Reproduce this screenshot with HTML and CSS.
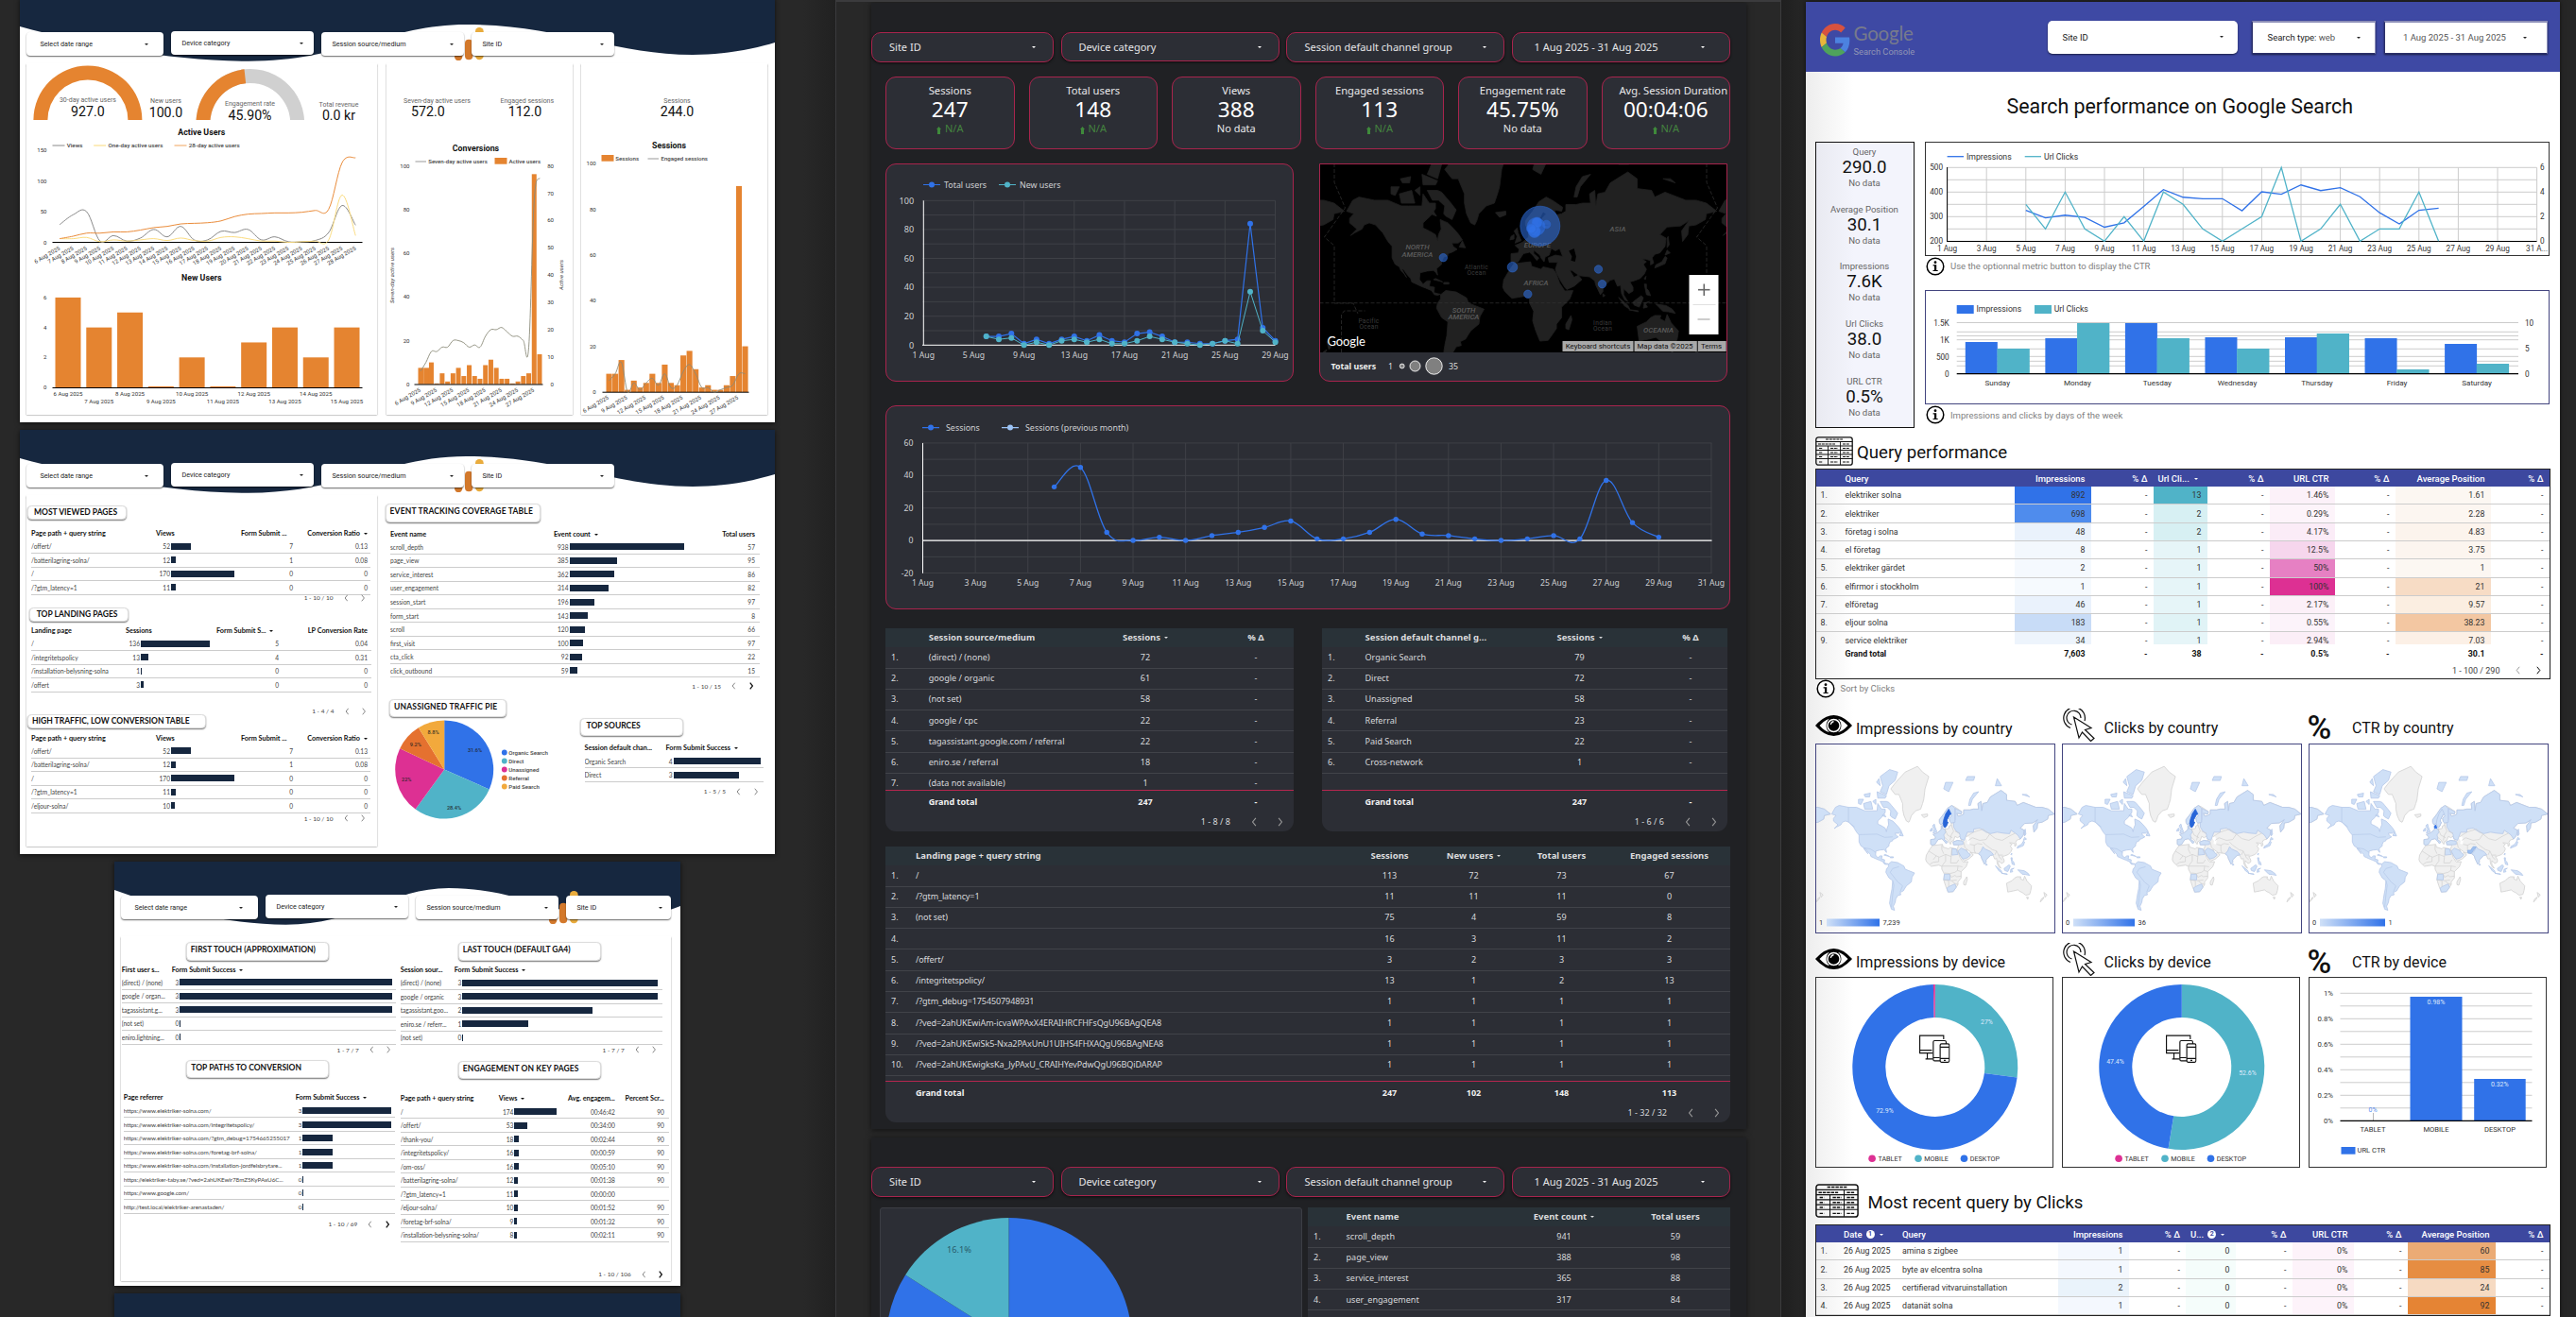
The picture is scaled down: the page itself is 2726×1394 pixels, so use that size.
FILE: index.html
```html
<!DOCTYPE html>
<html lang="en">
<head>
<meta charset="utf-8">
<title>Analytics reports</title>
<link rel="stylesheet" href="styles.css">
</head>
<body>
<svg class="defs" width="0" height="0">
  <symbol id="prev" viewBox="0 0 5 9"><path d="M4.2.8 1.2 4.5l3 3.7" fill="none" stroke="currentColor"/></symbol>
  <symbol id="next" viewBox="0 0 5 9"><path d="M.8.8l3 3.7-3 3.7" fill="none" stroke="currentColor"/></symbol>
  <symbol id="wave" viewBox="0 0 799 70" preserveAspectRatio="none"><path fill="#16273f" d="M0 0H799V47C779 53 749 60 712 60C630 60 570 28 472 28C392 28 340 66.700 242 66.700C159 66.700 69 49 0 30Z"/></symbol>
  <symbol id="bars" viewBox="0 0 31 35"><path fill="#d3792c" d="M0 25h8.300v6a4.150 4.150 0 0 1-8.300 0z"/><rect x="11" y="12.700" width="8.300" height="21.600" rx="4.100" fill="#d3792c"/><rect x="22" y="0" width="8.700" height="34.300" rx="4.200" fill="#eaac3c"/></symbol>
  <symbol id="info" viewBox="0 0 20 20"><circle cx="10" cy="10" r="8.800" fill="#fff" stroke="#000" stroke-width="1.500"/><circle cx="10" cy="5.700" r="1.400"/><path d="M7.600 8.300h3.600v5.600h1.500v1.200H7.500v-1.200H9V9.500H7.600z"/></symbol>
  <symbol id="eye" viewBox="0 0 39 22"><path d="M0 11Q19.500-11 39 11Q19.500 33 0 11z"/><path fill="#fff" d="M4.500 11Q10 5 15 3.700a9.500 9.500 0 0 0 0 14.600Q10 17 4.500 11zM34.500 11Q29 5 24 3.700a9.500 9.500 0 0 1 0 14.600Q29 17 34.500 11z"/><circle cx="19.500" cy="11" r="7.300" fill="#fff"/><circle cx="19.500" cy="11" r="5.800"/><path d="M19.500 6.500a4.500 4.500 0 0 0-3.300 3.300" fill="none" stroke="#fff" stroke-width="1.300"/></symbol>
  <symbol id="pointer" viewBox="0 0 34 35"><g fill="none" stroke="#111" stroke-width="1.200"><path d="M8 20.500A11.300 11.300 0 1 1 23 13"/><path d="M9.500 17A7.500 7.500 0 1 1 19 10"/><path fill="#fff" d="M11.500 9 30 20.500l-6.500 2 9.500 9-3.500 3-9-9.500-3.500 6z"/></g></symbol>
  <symbol id="grid" viewBox="0 0 40 31" preserveAspectRatio="none"><g fill="none" stroke="#111"><rect x=".8" y=".8" width="38.400" height="29.400" rx="2.500" stroke-width="1.300"/><path d="M.8 5.500h38.400M.8 10h38.400M.8 14.500h38.400M.8 19h38.400M.8 23.500h38.400" stroke-width="1"/><path d="M13.500 10v20M26.500 5.500v24.500" stroke-width=".9"/><path d="M11 3h18M3 8h18M29 8h7M4 12.500h4M16 12.500h8M29 12.500h7M4 17h4M16 17h8M29 17h7M4 21.500h4M16 21.500h8M29 21.500h7M4 27h4M16 27h8M29 27h7" stroke-width="1.200" stroke-dasharray="3 .8"/></g></symbol>
  <symbol id="devices" viewBox="0 0 34 31"><g fill="#fff" stroke="#111" stroke-width="1.200"><path d="M15 20H.8V1h26v4M.8 17H14M9 20v6M7 26.500h8" fill="none"/><rect x="15.500" y="6.500" width="14" height="22" rx="1.500"/><path d="M15.500 25h7"/><rect x="23" y="10" width="10" height="20" rx="1.500"/><path d="M23 13.500h10M23 26h10M27 28h2"/></g></symbol>
</svg>

<section class="col-left">
  <article class="page p1">
    <svg class="wave"><use href="#wave"/></svg><svg class="bars"><use href="#bars"/></svg>
    <div class="filters"><div class="filter f1">Select date range<i></i></div><div class="filter f2">Device category<i></i></div><div class="filter f3">Session source/medium<i></i></div><div class="filter f4">Site ID<i></i></div></div>
    <div class="cards">
      <div class="card"><svg id="overview" class="chart" viewBox="27.5 67 371.5 371.5"></svg></div>
      <div class="card narrow"><svg id="conversions" class="chart" viewBox="408.5 67 197.5 371.5"></svg></div>
      <div class="card narrow"><svg id="sessions-bars" class="chart" viewBox="614.5 67 197.5 371.5"></svg></div>
    </div>
  </article>

  <article class="page p2">
    <svg class="wave"><use href="#wave"/></svg><svg class="bars"><use href="#bars"/></svg>
    <div class="filters"><div class="filter f1">Select date range<i></i></div><div class="filter f2">Device category<i></i></div><div class="filter f3">Session source/medium<i></i></div><div class="filter f4">Site ID<i></i></div></div>
    <div class="cards">
      <div class="card stack">
        <h3 class="badge b-viewed">MOST VIEWED PAGES</h3>
        <div class="table light t-viewed" data-table="viewed"></div>
        <div class="pager pg-viewed" data-pager="1 - 10 / 10"></div>
        <h3 class="badge b-landing">TOP LANDING PAGES</h3>
        <div class="table light t-landing" data-table="landing"></div>
        <div class="pager pg-landing" data-pager="1 - 4 / 4"></div>
        <h3 class="badge b-traffic">HIGH TRAFFIC, LOW CONVERSION TABLE</h3>
        <div class="table light t-viewed t-traffic" data-table="traffic"></div>
        <div class="pager pg-traffic" data-pager="1 - 10 / 10"></div>
      </div>
      <div class="stack side">
        <h3 class="badge b-events">EVENT TRACKING COVERAGE TABLE</h3>
        <div class="table light t-events" data-table="events"></div>
        <div class="pager pg-events more" data-pager="1 - 10 / 15"></div>
        <div class="split">
          <div class="stack pie-col">
            <h3 class="badge b-pie">UNASSIGNED TRAFFIC PIE</h3>
            <svg id="traffic-pie" class="pie" viewBox="408.500 758.500 200 112"></svg>
          </div>
          <div class="stack">
            <h3 class="badge b-sources">TOP SOURCES</h3>
            <div class="table light t-sources" data-table="sources"></div>
            <div class="pager pg-sources" data-pager="1 - 5 / 5"></div>
          </div>
        </div>
      </div>
    </div>
  </article>

  <article class="page p3">
    <svg class="wave"><use href="#wave"/></svg><svg class="bars"><use href="#bars"/></svg>
    <div class="filters"><div class="filter f1">Select date range<i></i></div><div class="filter f2">Device category<i></i></div><div class="filter f3">Session source/medium<i></i></div><div class="filter f4">Site ID<i></i></div></div>
    <div class="card wide">
      <div class="stack half">
        <h3 class="badge b-first">FIRST TOUCH (APPROXIMATION)</h3>
        <div class="table light t-first" data-table="first"></div>
        <div class="pager pg-first" data-pager="1 - 7 / 7"></div>
        <h3 class="badge b-paths">TOP PATHS TO CONVERSION</h3>
        <div class="table light t-paths" data-table="paths"></div>
        <div class="pager pg-paths more" data-pager="1 - 10 / 69"></div>
      </div>
      <div class="stack half">
        <h3 class="badge b-last">LAST TOUCH (DEFAULT GA4)</h3>
        <div class="table light t-last" data-table="last"></div>
        <div class="pager pg-last" data-pager="1 - 7 / 7"></div>
        <h3 class="badge b-key">ENGAGEMENT ON KEY PAGES</h3>
        <div class="table light t-key" data-table="key"></div>
        <div class="pager pg-key more" data-pager="1 - 10 / 106"></div>
      </div>
    </div>
  </article>
  <article class="page p4"></article>
</section>

<section class="col-mid">
  <article class="dark d1">
    <div class="dfilters"><div class="dfilter a">Site ID<i></i></div><div class="dfilter b">Device category<i></i></div><div class="dfilter c">Session default channel group<i></i></div><div class="dfilter d">1 Aug 2025 - 31 Aug 2025<i></i></div></div>
    <div class="scores">
      <div class="score"><span>Sessions</span><b>247</b><em><svg viewBox="0 0 5 8"><path d="M2.500 0 5 3H4v5H1V3H0z"/></svg>N/A</em></div>
      <div class="score"><span>Total users</span><b>148</b><em><svg viewBox="0 0 5 8"><path d="M2.500 0 5 3H4v5H1V3H0z"/></svg>N/A</em></div>
      <div class="score"><span>Views</span><b>388</b><small>No data</small></div>
      <div class="score"><span>Engaged sessions</span><b>113</b><em><svg viewBox="0 0 5 8"><path d="M2.500 0 5 3H4v5H1V3H0z"/></svg>N/A</em></div>
      <div class="score"><span>Engagement rate</span><b>45.75%</b><small>No data</small></div>
      <div class="score last"><span>Avg. Session Duration</span><b>00:04:06</b><em><svg viewBox="0 0 5 8"><path d="M2.500 0 5 3H4v5H1V3H0z"/></svg>N/A</em></div>
    </div>
    <div class="drow">
      <div class="panel users"><svg id="users" viewBox="937 173 432 231"></svg></div>
      <div class="panel geo"><svg id="geo" viewBox="1395.500 173 432 231"></svg></div>
    </div>
    <div class="panel sessions"><svg id="sessions" viewBox="937 429 894 215"></svg></div>
    <div class="drow tables">
      <div class="dt t-source" data-table="source"></div>
      <div class="dt t-channel" data-table="channel"></div>
    </div>
    <div class="dt t-pages" data-table="pages"></div>
  </article>
  <article class="dark d2">
    <div class="dfilters"><div class="dfilter a">Site ID<i></i></div><div class="dfilter b">Device category<i></i></div><div class="dfilter c">Session default channel group<i></i></div><div class="dfilter d">1 Aug 2025 - 31 Aug 2025<i></i></div></div>
    <div class="drow second">
      <div class="piebox"><svg id="bigpie" viewBox="931 1278 447 116"></svg></div>
      <div class="dt t-ev" data-table="ev"></div>
    </div>
  </article>
</section>

<section class="col-right">
  <article class="sc">
    <header class="sc-head">
      <svg class="glogo" viewBox="0 0 48 48" preserveAspectRatio="none"><path fill="#d8523f" d="M24 9.500c3.540 0 6.710 1.220 9.210 3.600l6.850-6.850C35.900 2.380 30.470 0 24 0 14.620 0 6.510 5.380 2.560 13.220l7.980 6.190C12.430 13.720 17.740 9.500 24 9.500z"/><path fill="#4c82e0" d="M46.980 24.550c0-1.570-.15-3.090-.38-4.550H24v9.020h12.940c-.58 2.960-2.260 5.480-4.780 7.180l7.730 6c4.510-4.180 7.090-10.360 7.090-17.650z"/><path fill="#e9b63a" d="M10.530 28.590c-.48-1.450-.76-2.990-.76-4.590s.27-3.140.76-4.590l-7.980-6.190C.92 16.460 0 20.120 0 24c0 3.880.92 7.540 2.560 10.780l7.970-6.190z"/><path fill="#4fa35c" d="M24 48c6.480 0 11.930-2.130 15.890-5.810l-7.730-6c-2.150 1.450-4.920 2.300-8.160 2.300-6.260 0-11.570-4.220-13.470-9.910l-7.980 6.190C6.510 42.620 14.620 48 24 48z"/></svg>
      <div class="gname"><b>Google</b><span>Search Console</span></div>
      <div class="sf s1">Site ID<i></i></div>
      <div class="sf s2"><span>Search type: <u>web</u></span><i></i></div>
      <div class="sf s3">1 Aug 2025 - 31 Aug 2025<i></i></div>
    </header>
    <h1>Search performance on Google Search</h1>
    <div class="sc-top">
      <div class="kpis">
        <div><span>Query</span><b>290.0</b><span>No data</span></div>
        <div><span>Average Position</span><b>30.1</b><span>No data</span></div>
        <div><span>Impressions</span><b>7.6K</b><span>No data</span></div>
        <div><span>Url Clicks</span><b>38.0</b><span>No data</span></div>
        <div><span>URL CTR</span><b>0.5%</b><span>No data</span></div>
      </div>
      <div class="sc-charts">
        <div class="box k"><svg id="sc-line" viewBox="2037 150 661 121.500"></svg></div>
        <p class="note"><svg><use href="#info"/></svg>Use the optionnal metric button to display the CTR</p>
        <div class="box n"><svg id="sc-bars" viewBox="2037 307 661 121.500"></svg></div>
        <p class="note"><svg><use href="#info"/></svg>Impressions and clicks by days of the week</p>
      </div>
    </div>
    <h2 class="h-query"><svg><use href="#grid"/></svg><span>Query performance</span></h2>
    <div class="st t-query" data-table="query"></div>
    <p class="note sort"><svg><use href="#info"/></svg>Sort by Clicks</p>
    <div class="heads country"><h2 class="eye"><svg><use href="#eye"/></svg>Impressions by country</h2><h2 class="clicks"><svg><use href="#pointer"/></svg>Clicks by country</h2><h2 class="rate"><b>%</b>CTR by country</h2></div>
    <div class="trio"><div class="box m"><svg id="map1" viewBox="1921 787.500 254 201"></svg></div><div class="box m"><svg id="map2" viewBox="2182 787.500 254 201"></svg></div><div class="box m"><svg id="map3" viewBox="2443 787.500 254 201"></svg></div></div>
    <div class="heads device"><h2 class="eye"><svg><use href="#eye"/></svg>Impressions by device</h2><h2 class="clicks"><svg><use href="#pointer"/></svg>Clicks by device</h2><h2 class="rate"><b>%</b>CTR by device</h2></div>
    <div class="trio dev"><div class="box k"><svg id="donut1" viewBox="1920.500 1035 252.500 202"></svg></div><div class="box k"><svg id="donut2" viewBox="2181.500 1035 252.500 202"></svg></div><div class="box k"><svg id="ctr" viewBox="2443.500 1035 252.500 202"></svg></div></div>
    <h2 class="h-recent"><svg><use href="#grid"/></svg><span>Most recent query by Clicks</span></h2>
    <div class="st t-recent" data-table="recent"></div>
  </article>
</section>
<script src="app.js"></script>
</body>
</html>
```

FILE: styles.css
```css
*{box-sizing:border-box}
html{overflow:hidden}
body{margin:0;width:2726px;height:1394px;overflow:hidden;display:flex;background:#272727;font-family:Roboto,sans-serif;color:#222}
h1,h2,h3,p{margin:0;font-weight:400;white-space:nowrap}
svg{display:block}
.defs{position:absolute}
svg text{white-space:pre}

/* left column: light reports */
.col-left{width:884px;height:1394px;flex:none;overflow:hidden;padding-left:21px;background:linear-gradient(90deg,#282828 850px,#212121)}
.page{position:relative;width:799px;height:449px;margin-bottom:8px;padding:36px 0 0 6.5px;background:#fff;box-shadow:0 1px 5px #000a}
.p1{margin-top:-2px}
.p3{width:599px;margin-left:100px}
.p4{width:599px;height:25px;margin:0 0 0 100px;padding:0;background:#16273f}
.wave{position:absolute;left:0;top:0;width:100%;height:70px}
.bars{position:absolute;left:460px;top:31px;width:31px;height:35px}
.filters{position:relative;display:flex;height:26px;align-items:flex-start}
.filter{display:flex;align-items:center;justify-content:space-between;width:150.500px;height:25px;margin-right:8.500px;padding:0 11px 0 11.500px;background:#fff;border-radius:4px;box-shadow:0 1px 1.500px #0009;font-size:7.200px;color:#222}
.filter.f1{width:145px;padding:0 15.500px 0 15px}
.filter.f2{margin-top:-.7px}
.p3 .f4{width:111px;padding:0 9px 0 11.500px}
.filter i,.dfilter i,.sf i{border:2.200px solid transparent;border-top-color:#222;border-bottom:0}
.cards{display:flex;margin-top:7px}
.card{position:relative;width:371.500px;height:371.500px;background:#fff;box-shadow:0 .7px 1.500px #0008;margin-right:9.500px;flex:none}
.card.narrow{width:197.500px;margin-right:8.500px}
.p3 .card{display:flex;width:582px;height:365px;margin:16.500px 0 0 .3px}
.chart,.panel svg,.box>svg,.piebox svg{width:100%;height:100%}
.stack{display:flex;flex-direction:column;align-items:flex-start}
.card.stack{margin-right:0}
.half{width:292px;flex:none}
.badge{height:15px;flex:none;display:flex;align-items:center;border:1px solid #ddd;border-radius:4.500px;background:#fff;box-shadow:0 1px 1.500px #0008;font:700 8.500px/1 Lato,sans-serif;color:#111}
.b-viewed{width:104.500px;margin:11px 0 0 1.500px;padding-left:6px}
.b-landing{width:105px;margin:4.500px 0 0 3.700px;padding-left:6.500px}
.b-traffic{width:189px;margin:-2.500px 0 0 1.500px;padding-left:4px}
.b-events{width:164.500px;height:20px;margin:8.500px 0 0 8.500px;padding:0 0 2px 4px;letter-spacing:.18px}
.b-pie{width:123.500px;height:19.500px;margin:7.500px 0 0 13px;padding:0 0 2px 4px;letter-spacing:.18px}
.b-sources{width:108.500px;height:19px;margin:28px 0 0 6px;padding:0 0 2px 5.500px}
.b-first{width:151px;height:20px;margin:6px 0 0 69px;padding:0 0 2px 4px}
.b-last{width:151px;height:20px;margin:6px 0 0 65px;padding:0 0 2px 4px}
.b-paths{width:151px;height:19.500px;margin:4.500px 0 0 69px;padding:0 0 2px 4.500px}
.b-key{width:151px;height:19px;margin:5.200px 0 0 65px;padding:0 0 2px 4px;letter-spacing:.1px}

/* tables shared */
.row{display:grid;grid-template-columns:var(--cols);align-items:center}
.row>*{white-space:nowrap;display:flex;align-items:center;height:100%}
.l{justify-content:flex-start}.r{justify-content:flex-end}.c{justify-content:center}
.tri{border:2px solid transparent;border-top-color:currentColor;border-bottom:0;margin:1px 0 0 4px}
.body{overflow:hidden}
.light{font:6.600px Lato,sans-serif;color:#444;padding-left:4px}
.light .head{height:14px;font-weight:700;font-size:7.300px;color:#111}
.light .tr{height:14.520px;border-bottom:1px solid #ccc;margin-left:-4px;padding-left:4px}
.n{width:var(--n);text-align:right;flex:none}
.bar{height:7px;background:#16273f;margin-left:1px;flex:none}
.t-viewed{width:363px;margin:7.500px 0 0 1.500px;--cols:132px 90px 55px 79px;--n:15px}
.t-landing{width:364px;margin:2.500px 0 0 1.500px;--cols:100px 96px 66px 94px;--n:15px}
.t-traffic{margin-top:3px}
.t-events{width:395px;margin:5.700px 0 0 10px;--cols:173px 113px 100px;--n:15.500px}
.t-sources{width:193px;margin:5.800px 0 0 6.500px;--cols:86px 100px;--n:7px}
.t-first{width:294px;margin:2.500px 0 0 -3px;--cols:53px 233px;--n:7.500px}
.t-last{width:281px;margin:3px 0 0 0;--cols:57px 215px;--n:7.500px}
.t-paths{width:290px;margin:13.700px 0 0 0;padding-left:3px;--cols:182px 102px;--n:6.500px}
.p3 .light{letter-spacing:-.05px}
.t-paths .tr{padding-left:3px;margin-left:-3px;font-size:6.350px;letter-spacing:-.09px}
.t-paths .body{height:119.500px}
.t-key{width:288px;margin:14.200px 0 0 0;--cols:104px 62px 61px 52px;--n:15.500px}
.pager{display:flex;align-items:center;height:12px;flex:none;font:6.500px Lato,sans-serif;color:#444}
.pager span{width:40px;text-align:right;margin-right:11px}
.pager svg{width:4.500px;height:8px;color:#777;margin-right:14px}
.pager.more svg:last-child{color:#111;stroke-width:1.400}
.pg-viewed{margin:-3px 0 0 285px}.pg-landing{margin:14px 0 0 286px}.pg-traffic{margin:-.3px 0 0 285px}
.pg-events{margin:2.800px 0 0 324px}.pg-sources{margin:3.700px 0 0 120px}
.pg-first{margin:-.5px 0 0 212px}.pg-last{margin:-.7px 0 0 201px}.pg-paths{margin:1.500px 0 0 210.500px}.pg-key{margin:28px 0 0 208px}
.split{display:flex}
.pie-col{width:209px}
.pie{width:200px;height:112px;margin-left:9.500px}

/* middle column: dark report */
.col-mid{width:1001px;height:1394px;flex:none;overflow:hidden;border:1px solid #3b3b3d;border-width:2px 1px 0 1px;background:#282828;padding:1px 0 0 37px;font-family:"Noto Sans",sans-serif}
.dark{width:925.500px;background:#202124;box-shadow:0 1px 6px #0009}
.d1{height:1192px;padding-top:31px}
.d2{height:190px;margin-top:9px;padding-top:31px;overflow:hidden}
.dfilters{display:flex}
.dfilter{display:flex;align-items:center;justify-content:space-between;height:31.500px;border:1px solid #a8244d;border-radius:10px;background:#2c2e35;color:#e4e4e6;font-size:11px;box-shadow:0 1px 3px #000a}
.dfilter i{border-width:2.500px 2.500px 0;border-top-color:#fff}
.dfilter.a{width:193px;padding:0 18px;border-left-width:.5px}
.dfilter.b{width:231px;height:31px;margin:0 7.500px;padding:0 18px}
.dfilter.c{width:231px;padding:0 18.500px}
.dfilter.d{width:231.500px;margin-left:7.500px;padding:0 26px 0 23px}
.scores{display:flex;justify-content:space-between;margin:15px 16.500px 0 15px}
.score{width:136.500px;height:77px;padding-top:5px;border:1px solid #a8244d;border-radius:11px;background:#2c2e35;color:#e8e8ea;display:flex;flex-direction:column;align-items:center;white-space:nowrap;font-size:11.200px}
.score span{height:18px;line-height:18px}
.score b{font-weight:400;font-size:22.600px;line-height:22px;color:#fff}
.score em,.score small{font-style:normal;font-size:11px;line-height:18px;display:flex;align-items:center}
.score em{color:#44843f}
.score em svg{width:5px;height:8px;margin:4px 4px 0 0;fill:#3f8a3b}
.score.last span{margin-left:16px}
.drow{display:flex;margin:15.500px 0 0 15px}
.panel{border:1px solid #a8244d;border-radius:11px;background:#2c2e35;overflow:hidden;flex:none}
.panel svg{margin:-1px;width:calc(100% + 2px);height:calc(100% + 2px)}
.users{width:432px;height:231px}
.geo{width:432px;height:231px;margin-left:26.500px;border-radius:0 0 11px 11px}
.sessions{width:894px;height:215.500px;margin:25px 0 0 15px}
.drow.tables{margin-top:20.500px}
.dt{display:flex;flex-direction:column;background:#2c2e35;border-radius:0 0 11px 11px;font-size:9.050px;color:#d8d9dc;overflow:hidden}
.dt .head{height:20.300px;background:#293238;font-weight:700;font-size:9.500px;color:#dcdcde}
.dt .tr{height:22.300px;border-bottom:1px solid #414349}
.dt .row>*{padding-bottom:1.500px}
.dt .tr>:first-child,.dt .head>:first-child{padding-left:6px}
.dt .total{height:24px;border-top:1.500px solid #b5264f;font-weight:700;color:#f0f0f0}
.dt .foot{display:flex;align-items:center;justify-content:flex-end;height:19px;padding-right:11px}
.dt .foot svg{width:6px;height:10px;color:#999;margin-left:22px}
.t-source{width:432px;height:215px;--cols:45.700px 152.300px 154px 80px}
.t-channel{width:429px;height:215px;margin-left:30px;--cols:45.500px 148.500px 157px 78px}
.t-source .body,.t-channel .body{height:151px}
.t-pages{width:894px;height:291.500px;margin:16px 0 0 15px;--cols:32px 456px 91px 87px 99px 129px}
.t-pages .body{height:228px}
.t-pages .tr>:nth-child(2){letter-spacing:-.12px}
.t-ev{width:447px;height:140px;--cols:40.500px 147.500px 166px 70px}
.second{margin:11.500px 0 0 9px}
.piebox{width:447px;height:160px;margin-right:6px;background:#2c2e35;border:1px solid #3c3e44;border-radius:3px}
.piebox svg{height:116px;margin:-1px;width:447px}

/* right column: search console */
.col-right{width:841px;height:1394px;overflow:hidden;padding:2px 0 0 25.500px;background:linear-gradient(90deg,#1f1f1f,#252525 20px,#262626)}
.sc{width:798.500px;height:1392px;overflow:hidden;background:linear-gradient(90deg,#ededed,#fff 50px);box-shadow:0 0 5px #0009}
.sc-head{height:74px;background:#3e49a4;display:flex;align-items:flex-start;padding:20px 0 0 15.500px}
.glogo{width:32px;height:34.500px;margin-top:3px}
.gname{width:205.500px;margin-left:3.500px;padding-top:1px;color:#777a8c}
.gname b{display:block;font:400 20.500px/25px Lato,sans-serif;letter-spacing:-.2px}
.gname span{display:block;font:9.300px/12px Roboto,sans-serif;color:#9195b4;margin-top:1px}
.sf{display:flex;align-items:center;justify-content:space-between;height:34.500px;background:#fff;font-size:9.500px;color:#222;box-shadow:0 1px 2px #0009}
.sf u{text-decoration:none;color:#555}
.s1{width:201px;border-radius:5px;padding:0 15.500px}
.s2,.s3{border:1px solid #2b2f68;border-top:2px solid #8d8fb8;border-right-color:#8d8fb8}
.s2{width:131px;margin-left:15px;padding:0 15.500px}
.s3{width:173px;margin-left:9px;padding:0 21.500px 0 19px;color:#555}
h1{height:73.500px;line-height:73px;text-align:center;font-size:21.400px;color:#111;padding-right:6px}
.sc-top{display:flex;padding-left:10px}
.kpis{width:105px;height:303px;border:1.500px solid #111;background:linear-gradient(90deg,#e9eaf1,#f3f4fc 40px);text-align:center;padding-top:2.500px;font-size:9.600px;color:#666}
.kpis div{height:60.700px;display:flex;flex-direction:column}
.kpis span{line-height:16px}
.kpis b{font-weight:400;font-size:18.700px;line-height:17px;color:#111}
.sc-charts{margin-left:11.500px}
.box{border:1px solid #222;overflow:hidden;flex:none}
.box>svg{margin:-1px;width:calc(100% + 2px);height:calc(100% + 2px)}
.sc-charts .box{width:661px;height:121.500px}
.box.k{border:1.300px solid #333}
.box.n,.box.m{border:1px solid #43457f}
.note{display:flex;align-items:center;height:20px;margin-top:.8px;font-size:9.500px;color:#808080}
.note svg{width:20px;height:20px;margin:0 6px 0 1px}
.sc-charts .box.n{margin-top:15px}
h2{display:flex;align-items:center;font-size:18.600px;color:#111}
.h-query{margin:9.300px 0 0 10px;height:31px}
.h-query svg{width:40px;height:31px;margin-right:4.500px}
.h-query span{padding-top:2.500px}
.st{display:flex;flex-direction:column;margin-left:10px;width:778px;border:1px solid #222;font-size:8.800px;color:#333}
.st .head{height:17.700px;background:#3d489f;color:#fff;font-weight:500;font-size:9.500px}
.st .tr{height:19.280px;border-bottom:1px solid #ccc}
.st .row>*{padding:0 6px 0 0}
.st .row>:first-child{padding-left:5px}
.st .total{height:19px;font-weight:700;color:#111}
.st .foot{display:flex;align-items:center;justify-content:flex-end;height:17px;padding-right:9px;font-size:9px;color:#444}
.st .foot svg{width:5px;height:9px;color:#999;margin-left:17px}
.st .foot svg:first-of-type{margin-left:16px}
.st .foot svg:last-child{color:#000}
.st .tri{margin-left:5px}
.st .indent{padding-left:5px}
.num{width:9px;height:9px;border-radius:5px;background:#fff;color:#3d489f;font:700 7px/9px Roboto;text-align:center;margin-left:4px}
.t-query{height:223px;margin-top:3.700px;--cols:31px 179px 81px 66px 57px 66px 69px 64px 101px 62px}
.t-query .body{height:167px}
.t-recent{margin-top:7.500px;--cols:29.500px 62px 164.500px 75px 60.500px 52.500px 60px 65px 57px 93px 57px}
.note.sort{margin:-.5px 0 0 10px}
.note.sort svg{margin-right:6px}
.heads{display:flex;height:37px;margin:11px 0 0 10px}
.heads h2{font-size:16px;width:261px;align-items:flex-start;line-height:20px;padding-top:12.300px}
.heads .eye svg{width:39px;height:22px;margin:-5px 4.500px 0 0}
.heads .clicks{padding-top:11px}
.heads .clicks svg{width:34px;height:35px;margin:-11px 10px 0 1px}
.heads .rate{padding-top:11px}
.heads .rate b{font:500 35px/30px Roboto,sans-serif;width:47.500px;margin:-5px 0 0 -1px}
.trio{display:flex;margin-left:10.500px}
.trio .box{width:254px;height:201px;margin-right:7px}
.heads.device{margin-top:10px}
.heads.device .eye{padding-top:11.500px}
.trio.dev{margin:-.5px 0 0 10px}
.trio.dev .box{width:252.500px;height:202px;margin-right:8.700px}
.h-recent{margin:16.500px 0 0 10px;height:36px}
.h-recent svg{width:46px;height:36px;margin-right:10px}
.h-recent span{padding-top:5px}
```

FILE: app.js
```js
const BLUE = '#3072e8', TEAL = '#50b3c8', ORANGE = '#e58430', PINK = '#dd3093';
const $ = id => document.getElementById(id);
const line = (x1, y1, x2, y2, c, w = 1, more = '') => `<line x1="${x1}" y1="${y1}" x2="${x2}" y2="${y2}" stroke="${c}" stroke-width="${w}" ${more}/>`;
const rect = (x, y, w, h, c) => `<rect x="${x}" y="${y}" width="${w}" height="${h}" fill="${c}"/>`;
const text = (x, cy, s, size, c = '#444', anchor = 'start', more = '') =>
  `<text x="${x}" y="${cy + size * 0.36}" font-size="${size}" fill="${c}" text-anchor="${anchor}" ${more}>${s}</text>`;
const poly = (p, c, w = 1) => `<polyline points="${p.map(q => q.join()).join(' ')}" fill="none" stroke="${c}" stroke-width="${w}"/>`;
function smooth(p, c, w = 1) {
  let d = `M${p[0]}`;
  for (let i = 0; i < p.length - 1; i++) {
    const a = p[i - 1] || p[i], b = p[i], e = p[i + 1], f = p[i + 2] || e;
    d += `C${b[0] + (e[0] - a[0]) / 5.5},${b[1] + (e[1] - a[1]) / 5.5} ${e[0] - (f[0] - b[0]) / 5.5},${e[1] - (f[1] - b[1]) / 5.5} ${e}`;
  }
  return `<path d="${d}" fill="none" stroke="${c}" stroke-width="${w}"/>`;
}
const pts = (v, x0, dx, y0, k) => v.map((n, i) => [x0 + i * dx, y0 - n * k]);
function slice(cx, cy, R, r, from, to, c) {
  const P = (rad, t) => [cx + rad * Math.sin(t * 2 * Math.PI), cy - rad * Math.cos(t * 2 * Math.PI)];
  const big = to - from > .5 ? 1 : 0;
  return `<path fill="${c}" d="M${P(R, from)}A${R} ${R} 0 ${big} 1 ${P(R, to)}L${P(r, to)}A${r} ${r} 0 ${big} 0 ${P(r, from)}Z"/>`;
}

/* ---- overview card ---- */
(() => {
  const views = [29, 45, 50, 2, 11, 2, 7, 21, 9, 26, 4, 4, 18, 16, 21, 4, 9, 1, 1, 3, 16, 60, 28];
  const one = [6, 6, 8, 1, 4, 2, 4, 6, 3, 7, 3, 2, 8, 9, 6, 2, 2, 0, 1, 2, 4, 77, 11];
  const month = [6, 10, 15, 15, 17, 17, 20, 24, 26, 30, 31, 32, 35, 42, 46, 47, 48, 48, 49, 52, 54, 130, 138];
  let s = slice(92.4, 127, 57.5, 42.5, -.25, .25, ORANGE);
  s += `<clipPath id="g"><rect x="200" y="60" width="130" height="66.900"/></clipPath><g clip-path="url(#g)">` + slice(264.3, 130.3, 57.3, 42.4, -.3, .3, '#d0d0d0') + slice(264.3, 130.3, 57.3, 42.4, -.3, -.0175, ORANGE) + '</g>';
  for (const [x, y, a, b] of [[92.4, 105.7, '30-day active users', '927.0'], [175, 106.7, 'New users', '100.0'], [264, 109.7, 'Engagement rate', '45.90%'], [358, 110.5, 'Total revenue', '0.0 kr']])
    s += text(x, y, a, 7, '#666', 'middle') + text(x, y + 11.8, b, 14.2, '#111', 'middle');
  s += text(212.7, 140, 'Active Users', 8.8, '#111', 'middle', 'font-weight="700"');
  [[55, 'Views', '#8a8a8a'], [98.7, 'One-day active users', '#f9d978'], [184, '28-day active users', '#f0a45c']].forEach(([x, t, c]) => s += line(x, 154, x + 13, 154, c) + text(x + 15.3, 154, t, 6.2, '#444', 'start', 'font-weight="500"'));
  [[150, 159], [100, 191.7], [50, 224], [0, 256.7]].forEach(([t, y]) => s += text(49, y, t, 6.1, '#333', 'end'));
  s += line(55, 256.5, 383, 256.5, '#000');
  s += smooth(pts(views, 62.7, 14.23, 256.5, .649), '#8a8a8a') + smooth(pts(one, 62.7, 14.23, 256.5, .649), '#fbdc7f') + smooth(pts(month, 62.7, 14.23, 256.5, .649), '#ea8c3b');
  for (let i = 0; i < 23; i++) { const x = 63.5 + i * 14.23; s += `<text font-size="6" fill="#333" text-anchor="end" transform="translate(${x},264) rotate(-30)">${i + 6} Aug 2025</text>`; }
  s += text(212.7, 294, 'New Users', 8.8, '#111', 'middle', 'font-weight="700"');
  [[6, 315], [4, 346.7], [2, 378], [0, 410]].forEach(([t, y]) => s += text(49, y, t, 6.1, '#333', 'end'));
  [6, 4, 5, .07, 2, .07, 3, 4, 2, 4].forEach((v, i) => {
    s += rect(58 + i * 32.78, 410 - v * 15.85, 27, v * 15.85, ORANGE);
    s += text(71.5 + i * 32.78, 417 + (i % 2) * 8, `${i + 6} Aug 2025`, 6.1, '#333', 'middle');
  });
  s += line(55, 410.5, 383, 410.5, '#000');
  $('overview').innerHTML = s;

  /* conversions */
  s = text(462, 106.7, 'Seven-day active users', 7, '#666', 'middle') + text(452.3, 118.3, '572.0', 14.2, '#111', 'middle') + text(557.3, 106.7, 'Engaged sessions', 7, '#666', 'middle') + text(555, 118.3, '112.0', 14.2, '#111', 'middle');
  s += text(503, 157, 'Conversions', 8.8, '#111', 'middle', 'font-weight="700"');
  s += line(439, 171, 450.500, 171, '#999') + text(452.7, 171, 'Seven-day active users', 6.1, '#444', 'start', 'font-weight="500"') + rect(523, 167, 13, 6.7, ORANGE) + text(538, 171, 'Active users', 6.1, '#444', 'start', 'font-weight="500"');
  for (let i = 0; i <= 5; i++) s += text(433, 406.7 - i * 46.2, i * 20, 6.1, '#333', 'end');
  for (let i = 0; i <= 8; i++) s += text(585.5, 406.7 - i * 28.9, i * 10, 6.1, '#333', 'end');
  [6, 6, 8, .3, 4, 1, 4, 6, 3, 7, 3, 2, 7, 9, 6, 2, 2, .3, 1, 3, 4, 77, 11].forEach((v, i) => s += rect(442 + i * 5.727, 406.7 - v * 2.888, i < 2 ? 5.8 : 5, v * 2.888, ORANGE));
  s += line(438, 407, 574, 407, '#000');
  s += smooth(pts([6, 10, 15, 15, 17, 17, 20, 20, 19, 17, 18, 17, 22, 25, 25, 26, 24, 22, 22, 20, 17, 84, 94.500], 444.5, 5.727, 406.7, 2.31), '#8a8a78', .9);
  for (let i = 0; i < 8; i++) s += `<text font-size="6" fill="#333" text-anchor="end" transform="translate(${445 + i * 17.18},414) rotate(-30)">${6 + i * 3} Aug 2025</text>`;
  s += `<text font-size="6" fill="#333" text-anchor="middle" font-style="italic" transform="translate(416.500,291.500) rotate(-90)">Seven-day active users</text><text font-size="6" fill="#333" text-anchor="middle" font-style="italic" transform="translate(595.500,291) rotate(-90)">Active users</text>`;
  $('conversions').innerHTML = s;

  /* sessions */
  s = text(716, 106.7, 'Sessions', 7, '#666', 'middle') + text(716, 118.3, '244.0', 14.2, '#111', 'middle') + text(707.5, 154, 'Sessions', 8.8, '#111', 'middle', 'font-weight="700"');
  s += rect(636, 164, 13, 6.7, ORANGE) + text(650.8, 168, 'Sessions', 6.1, '#444', 'start', 'font-weight="500"') + line(685, 168, 696.5, 168, '#999') + text(699, 168, 'Engaged sessions', 6.1, '#444', 'start', 'font-weight="500"');
  for (let i = 0; i <= 5; i++) s += text(630.3, 415 - i * 48.4, i * 20, 6.1, '#333', 'end');
  [8, 8, 14, 1, 5, 2, 4, 8, 4, 12, 4, 3, 16, 18, 10, 2, 3, 1, 1, 3, 7, 90, 20].forEach((v, i) => s += rect(641 + i * 6.545, 415 - v * 2.423, 6.1, v * 2.423, ORANGE));
  s += line(637, 415.2, 792, 415.2, '#000');
  s += smooth(pts([5, 8, 13, 0, 4, 1, 4, 6, 3, 8, 2, 3, 9, 12, 8, 2, 2, 0, 1, 2, 3, 8, 8], 644, 6.545, 415, 2.423), '#8a8a78', .9);
  for (let i = 0; i < 8; i++) s += `<text font-size="6" fill="#333" text-anchor="end" transform="translate(${644 + i * 19.6},422) rotate(-30)">${6 + i * 3} Aug 2025</text>`;
  $('sessions-bars').innerHTML = s;

  /* traffic pie */
  s = ''; let a = 0;
  [[.316, BLUE, 'Organic Search'], [.284, TEAL, 'Direct'], [.22, PINK, 'Unassigned'], [.092, '#e5712f', 'Referral'], [.088, '#f2a93c', 'Paid Search']].forEach(([v, c, t], i) => {
    s += slice(469.7, 814, 52, 0, a, a + v, c); a += v;
    s += `<circle cx="533.300" cy="${796 + i * 9}" r="2.900" fill="${c}"/>` + text(537.8, 796 + i * 9, t, 6.1, '#444', 'start', 'font-weight="500"');
  });
  [[502, 793, '31.6%'], [480, 854, '28.4%'], [429.700, 824, '22%'], [439.3, 787, '9.2%'], [458, 774, '8.8%']].forEach(([x, y, t]) => s += text(x, y, t, 5.6, '#222', 'middle', 'font-weight="500" opacity=".85"'));
  $('traffic-pie').innerHTML = s;
})();

/* ---- dark charts ---- */
(() => {
  const G = '#3f4147', L = '#cfd0d3';
  const dots = (p, c, r = 3) => p.map(q => `<circle cx="${q[0]}" cy="${q[1]}" r="${r}" fill="${c}"/>`).join('');
  const leg = (x, y, c, t, gap = 22) => line(x, y, x + 18, y, c, 1.2) + `<circle cx="${x + 9}" cy="${y}" r="3" fill="${c}"/>` + text(x + gap, y, t, 8.9, L);
  let s = leg(977, 195.5, BLUE, 'Total users') + leg(1057, 195.5, TEAL, 'New users');
  for (let i = 0; i <= 10; i++) { const y = 365.3 - i * 15.3; if (i) s += line(976, y, 1349.5, y, G); if (i % 2 == 0) s += text(967.2, y, i * 10, 9.1, L, 'end'); }
  for (let i = 0; i < 8; i++) { const x = 977.3 + i * 53.17; s += line(x, 212.3, x, 365.3, i ? G : '#fff') + text(x, 376, `${1 + i * 4} Aug`, 8.7, L, 'middle'); }
  s += line(976, 365.3, 1349.5, 365.3, '#fff');
  const t = pts([6, 6, 8, 1, 4, 1, 4, 6, 3, 7, 3, 2, 8, 9, 6, 2, 2, 1, 1, 3, 4, 84, 12, 3], 1043.7, 13.3, 365.3, 1.53);
  const n = pts([6, 4, 5, 0, 2, 0, 3, 4, 2, 4, 1, 1, 3, 6, 4, 2, 1, 0, 1, 3, 1, 37, 10, 2], 1043.7, 13.3, 365.3, 1.53);
  s += poly(t, BLUE, 1.2) + dots(t, BLUE) + poly(n, TEAL) + dots(n, TEAL);
  $('users').innerHTML = s;

  s = leg(976, 452.3, BLUE, 'Sessions', 25) + leg(1060, 452.3, '#9cc3f5', 'Sessions (previous month)', 25);
  for (let i = 0; i <= 8; i++) { const y = 468.7 + i * 17.2; s += line(976, y, 1811.5, y, G); if (i % 2 == 0) s += text(966.5, y, 60 - i * 10, 8.7, L, 'end'); }
  for (let i = 0; i < 16; i++) { const x = 976.5 + i * 55.63; s += line(x, 468.7, x, 606.5, i ? G : '#fff') + text(x, 616.7, `${1 + i * 2} Aug`, 8.6, L, 'middle'); }
  s += line(976, 571.9, 1811.5, 571.9, '#fff', 1.2);
  const v = pts([33, 45, 5, 0, 2, 0, 3, 5, 8, 12, 1, 1, 5, 13, 4, 3, 1, 0, 1, 3, 1, 37, 11, 2], 1115.6, 27.815, 571.8, 1.718);
  s += smooth(v, BLUE, 1.3) + dots(v, BLUE, 2.7);
  $('sessions').innerHTML = s;

  s = slice(1067.8, 1419, 129.9, 0, 0, .6, BLUE) + slice(1067.8, 1419, 129.9, 0, .6, .84, BLUE) + slice(1067.8, 1419, 129.9, 0, .84, 1, TEAL);
  s += line(1067.8, 1289, 1067.8, 1419, '#2b5cb0', .6) + text(1015, 1322.5, '16.1%', 9.3, '#2a5c6b', 'middle');
  $('bigpie').innerHTML = s;
})();

/* ---- world maps ---- */
const W = {
  na: '-168,66 -162,70 -156,71 -141,70 -128,70 -115,68 -108,68 -95,68 -94,72 -88,69 -82,69 -82,67 -87,64 -94,61 -94,58.5 -88,57 -82,55 -80,51.5 -79,55 -76.5,58 -77.5,62.5 -70,61 -65,58.5 -60,55.5 -56,52 -60,50 -66,50 -65,48 -61,46 -66,44 -70,43 -70,41.5 -74,40.5 -76,37 -76,35 -81,31.5 -80,26 -82,28.5 -84,30 -90,29.5 -97,28 -97.5,22 -94,18 -90,21 -87,21 -88,16 -83,15 -83.5,10 -80,9 -77,8.5 -80,7.5 -83,8 -86,12 -92,14.5 -96,16 -105,20 -106,23 -109,26 -113,31 -114.5,31 -110,24 -112,27 -115.5,30 -117,33 -121,35 -124,40 -124,48 -128,51 -133,56 -140,60 -146,61 -151,60 -153,58 -160,56 -164,54.5 -158,58 -165,61 -165,63 -161,65',
  nai: ['-80,73 -76,72.5 -72,71 -67,69 -62,66.5 -66,62.5 -72,64 -74,65 -73,68 -79,70 -85,70 -90,73', '-117,72 -105,73 -102,69 -115,69', '-125,74 -117,74 -121,71.5 -125,72', '-90,77 -80,76 -76,79 -66,80.5 -62,82.5 -75,83 -90,81.5 -86,79', '-95,77 -80,75.5 -82,74.5 -94,74.5', '-116,76 -106,76.5 -107,75 -114,75', '-59,47.5 -53,47 -56,51.5', '-84,22 -75,20 -77,21 -82,23', '-74,19.5 -69,19.5 -69,18 -74,18', '-96,80 -90,79 -92,81', '-102,73 -97,74 -97,71.5', '-87,65 -81,64 -84,66'],
  gl: '-73,78 -66,76 -60,76 -54,72 -54,69 -52,65 -48,61 -44,60 -42,62 -40,65 -33,68 -25,69 -22,72 -20,74 -18,78 -12,81.5 -22,82.5 -30,83.6 -50,82.5 -65,80',
  sa: '-77,8 -72,12 -62,10.5 -52,5 -50,0 -44,-2.5 -35,-6 -39,-13 -40,-20 -48,-26 -53,-33 -58,-35 -57,-38 -62,-39 -65,-43 -66,-47 -69,-51 -67,-55 -72,-54 -75,-48 -73,-38 -71,-30 -70,-18 -76,-14 -81,-5 -80,0 -77,4',
  af: '-6,35.5 10,37 11,33.5 20,31 22,33 32,31 35,27 38,19 43,11.5 51,12 48,4 40,-4 40,-14 35,-20 35,-24 32,-28 27,-34 19,-34.5 15,-26 12,-17 13,-8 9,0 9,4.5 4,6.5 -8,4.5 -15,11 -17,15 -16,22 -10,31',
  eu: '-9,37 -9,43 -2,43.5 -1,46 -5,48.5 2,50.5 8,53.5 8,57 10.5,57.5 10,54.5 14,54 20,54.5 21,57 24,57.5 24,59.3 30,60 22,60.5 21,63 25,65 22,65.8 17.5,62 17,60.5 19,60 16.5,57 14.5,55.5 12.5,56 11,59 7,58 5,60 5,62 12,66 18,69.5 25,71 31,70 41,67.5 40,66 33,66.5 35,64.5 40,65 44,66 44,68.5 54,68.5 60,69 68,69 67,72 72,73 73,68 75,72 82,72.5 87,75 104,77.5 113,76 113,73.5 127,73 130,71 140,72.5 160,70 170,70 180,69 190,66 180,65 179,62.5 170,60 163,59.5 162,55 157,51 156,57 163,62 155,59.5 142,59 135,55 141,53 140,48 135,43.5 130,42.5 127.5,40 129,36 126,34.5 126,38 121,39 118,39 122,37 119,35 122,31 120,27 116,23 110,21 106,20 109,15 109,11.5 105,9 103,11 100,13.5 100,8 104,1.5 101,3 98,9 97,17 94,16 91,22.5 87,21.5 80,15 80,11 77.5,8 73,17 72,21 67,24.5 57,25.5 50,30 48,30 52,24 56,26 59.5,22 52,16 45,13 43,15 39,21 35,28 34,31 36,36.5 28,36.5 27,40 34,42 41,41 38,46.5 34,45 30,46.5 28,42 24,40.5 23,37 20,40 19,42 13,45.5 13,43 18,40 16,38 12,42 9,44 3,43 0,39.5 -2,37 -6,36',
  eui: ['-5,50 1,51.5 0,53 -2,56 -3,58.5 -6,57 -3,54', '-10,52 -6,52.5 -6,55 -9,54', '52,71 55,71 58,74 68,77 60,76.5 54,74', '12,78 20,77 27,80 15,80', '47,80.5 60,80.5 62,81.5 50,81.5', '95,79 105,79 98,81', '138,76 150,75 145,76', '142,47 144,49 143,54 142,53'],
  isl: ['-24,65.5 -14,66 -14,64.5 -20,63.5', '44,-20 49,-12 50,-16 47,-25 44,-24', '113,-22 122,-18 126,-14 130,-12 136,-12 135,-15 140,-17.5 142,-11 146,-19 153,-26 152,-32 150,-37.5 144,-38.5 138,-35 135,-34 131,-31.500 124,-33 115,-34.5', '145,-41 148,-41 147,-43.5', '173,-35 178,-38 175,-41', '173,-41 171,-44 167,-46.5 169,-43'],
  asi: ['130,32 136,34 140,35.5 142,40 140,41 137,37 131,34.5', '140,42 145,43.5 142,45.5', '95,5.5 104,-2 106,-6 101,-3', '105,-6.5 114,-7.5 114,-8.5', '109,1 117,7 119,5 117,0 115,-4 110,-2', '119,-5 120,0 125,1.5 121,-1 123,-4', '131,-1 141,-2.5 147,-6 150,-10 143,-8.5 138,-8', '120,18 122,18 122,14 124,12 126,7 122,8 121,13', '80,9 82,7 80,6', '120,23 121.5,25 121,22'],
  caspian: '47,45 52,46.5 54,41 53,37 49,38 50,41',
  russia: '30,69.5 41,67.5 40,66 33,66.5 35,64.5 40,65 44,66 44,68.5 54,68.5 60,69 68,69 67,72 72,73 73,68 75,72 82,72.5 87,75 104,77.5 113,76 113,73.5 127,73 130,71 140,72.5 160,70 170,70 180,69 190,66 180,65 179,62.5 170,60 163,59.5 162,55 157,51 156,57 163,62 155,59.5 142,59 135,55 141,53 140,48 135,43.5 131,48 127,50 120,53 118,49.5 108,50 98,51 87,49.5 80,51 70,55 60,54 60,51 50,51 47,46 45,42 39,44 38,46.5 38,49 32,52 28,56 28,60 30,62',
  west: '-9,37 -9,43 -2,43.5 -1,46 -5,48.5 2,50.5 8,53.5 8,57 10.500,57.5 10,54.5 14,54 15,51 12,48 13,45.5 13,43 18,40 16,38 12,42 9,44 3,43 0,39.5 -2,37 -6,36',
  nordic: '24,59.3 30,60 30,69.5 25,71 18,69.5 12,66 5,62 5,60 7,58 11,59 12.5,56 14.5,55.5 16.5,57 19,60 17,60.5 17.5,62 22,65.8 25,65 21,63 22,60.5',
  sweden: '11,59 12.5,56 14.5,55.5 16.5,57 19,60 17,60.5 17.5,62 22,65.8 24,66 20,69 15,66 12,62',
  denmark: '8,55 8,57 10.5,57.5 12,55',
  india: '68,24 72,21 73,17 77.5,8 80,11 80,15 87,21.5 92,22.5 88,27 78,31 75,34 72,28',
  pakistan: '62,25 67,24.5 70,28 75,34 70,34 66,29 61,29',
  saudi: '35,28 39,21 43,16 50,18 55,22 48,29 40,32', turkey: '27,40 34,42 43,41 43,37 36,36.5 28,36.5', egypt: '25,31 32,31 35,23 25,22', safr: '17,-29 20,-27 30,-23 32,-28 27,-34 19,-34.5', angola: '12,-17 13,-8 22,-8 22,-17',
};
const project = (str, cx, cy, R) => 'M' + str.trim().split(/\s+/).map(q => { const [a, b] = q.split(',').map(Number); return (cx + a * R * Math.PI / 180).toFixed(1) + ',' + (cy - R * Math.log(Math.tan(Math.PI / 4 + b * Math.PI / 360))).toFixed(1); }).join('L') + 'Z';

(() => {
  const cx = 1608.3, cy = 320.7, R = 62.7;
  let s = `<clipPath id="mc"><rect x="1396.500" y="173" width="430" height="200"/></clipPath>` + rect(1396.5, 173, 430, 200, '#000') + '<g clip-path="url(#mc)">';
  for (const o of [-394, 0, 394]) {
    for (const p of [W.na, ...W.nai, W.gl, W.sa, W.af, W.eu, ...W.eui, ...W.isl, ...W.asi]) s += `<path d="${project(p, cx + o, cy, R)}" fill="#212121" stroke="#212121" stroke-width=".8" stroke-linejoin="round"/>`;
    s += `<path d="${project(W.caspian, cx + o, cy, R)}"/>`;
  }
  s += line(1396, 320.7, 1827, 320.7, '#333', .7, 'stroke-dasharray="4 2"');
  const D = 'fill="none" stroke="#333" stroke-width=".7" stroke-dasharray="4 2"';
  s += `<path ${D} d="M1411.500 173v20l11.500 27-22 31 10.500 9v61h20l5 11M1805.500 173v20l11.500 27-22 31 10.500 9v61M1419 373v-40l3-4h22"/>`;
  const C = '#3c3c3c', I = 'font-style="italic" font-weight="500" font-family="Roboto"';
  [[1499.5, 261.5, 'NORTH'], [1499.5, 269, 'AMERICA'], [1548.5, 328.5, 'SOUTH'], [1548.5, 335.5, 'AMERICA'], [1625, 299.3, 'AFRICA'], [1711.5, 242.3, 'ASIA'], [1754.5, 348.7, 'OCEANIA'], [1626.5, 259.3, 'EUROPE']].forEach(([x, y, t]) => s += text(x, y, t, 7.8, '#5c5c5c', 'middle', I));
  [[1562, 282.7, 'Atlantic'], [1562, 288.5, 'Ocean'], [1448, 339.5, 'Pacific'], [1448, 345.5, 'Ocean'], [1695.5, 342, 'Indian'], [1695.5, 348, 'Ocean']].forEach(([x, y, t]) => s += text(x, y, t, 6.6, C, 'middle', 'letter-spacing=".3" font-family="Roboto"'));
  const dot = (x, y, r, o = .55) => `<circle cx="${x}" cy="${y}" r="${r}" fill="${BLUE}" fill-opacity="${o}" stroke="#2d68cf" stroke-opacity=".8" stroke-width=".7"/>`;
  s += dot(1629.3, 239.2, 21) + dot(1625, 240, 9.5, .6) + dot(1623.3, 245, 6.5, .8) + dot(1626, 235.5, 5.5, .8) + dot(1636, 237.5, 4.3, .5) + dot(1620, 242, 5, .7);
  [[1526.8, 272.7, 4.2], [1600, 282.7, 5.3], [1616.3, 311.3, 4.2], [1691, 285, 4.2], [1695, 300.7, 4.2]].forEach(a => s += dot(...a));
  s += text(1404, 361, 'Google', 13, '#fff', 'start', 'font-family="Lato" letter-spacing="-.1"');
  s += rect(1653, 361, 75, 11, '#a9a9a9') + rect(1729, 361, 66.3, 11, '#a9a9a9') + rect(1796.2, 361, 30, 11, '#a9a9a9');
  [[1690.500, 'Keyboard shortcuts'], [1761.500, 'Map data ©2025'], [1810.5, 'Terms']].forEach(([x, t]) => s += text(x, 366.500, t, 7.9, '#111', 'middle', 'font-family="Roboto"'));
  s += rect(1787, 291, 31, 63, '#fff') + line(1791, 322.5, 1815, 322.5, '#e0e0e0') + line(1796.5, 306.7, 1809, 306.7, '#666', 1.6) + line(1802.8, 300.5, 1802.8, 313, '#666', 1.6) + line(1796, 338, 1809, 338, '#c0c0c0', 1.6) + '</g>';
  s += line(1395.5, 173.5, 1411, 173.5, '#7a1c3a') + line(1811.5, 173.5, 1827, 173.5, '#7a1c3a') + line(1396, 173, 1396, 373, '#a3234b') + line(1827, 173, 1827, 373, '#a3234b');
  s += text(1408, 387.7, 'Total users', 8.8, '#eee', 'start', 'font-weight="700"') + text(1468.5, 387.7, '1', 8.8, '#ddd') + text(1532.5, 387.7, '35', 8.800, '#ddd');
  [[1483.2, 2.4], [1497, 5.500], [1517, 8.7]].forEach(([x, r]) => s += `<circle cx="${x}" cy="387.500" r="${r}" fill="#808080" stroke="#eee"/>`);
  $('geo').innerHTML = s;

  const light = (id, x, lo, hi, kind, bw) => {
    const mx = x + 128, my = 920.5, r = 37.73; let s = '';
    const add = (p, f, st, o) => `<path d="${project(p, mx + o, my, r)}" fill="${f}" stroke="${st}" stroke-width=".8" stroke-linejoin="round"/>`;
    const F = '#cfe0f7', S = '#b5c8e8', g = '#f0f0f0', gs = '#d0d0d0';
    for (const o of [-237, 0, 237]) {
      [W.gl, W.af, W.eu, ...W.isl].forEach(p => s += add(p, g, gs, o));
      [W.na, ...W.nai, W.sa, W.russia, W.west, W.nordic, ...W.eui, ...W.asi, W.india, W.saudi, W.turkey, W.egypt, W.safr, W.angola].forEach(p => s += add(p, F, S, o));
      s += `<path d="${project(W.caspian, mx + o, my, r)}" fill="#fff"/>`;
      const b = (p, c = gs) => `<path d="${project(p, mx + o, my, r).replace('Z', '')}" fill="none" stroke="${c}" stroke-width=".7"/>`;
      s += b('-124,48.500 -95,49 -83,45.500 -70,46', S) + b('-141,70 -141,60 -131,56', S) + b('-117,32.5 -106,31 -97,26', S) + b('-70,-18 -68,-25 -70,-38 -72,-52', S) + b('-58,-34 -54,-26 -62,-20 -70,-10 -74,-5 -70,1 -60,4', S);
      ['-12,28 0,21 5,19 15,23 24,20 25,31', '9,36 9,30 12,24', '-5,15 0,21', '4,19 4,12 -5,11 -10,8', '15,23 15,13 9,5', '24,20 23,10 33,10 36,15', '9,5 18,5 27,5 35,5 42,4', '35,5 34,-2 40,-4', '13,-6 22,-7 30,-5 34,-2', '22,-8 24,-13 30,-10 33,-12 40,-11', '22,-18 25,-18 33,-17', '20,-27 20,-18 12,-17', '25,-18 29,-22 35,-24', '48,46 60,51 75,54 86,49 80,43 70,42 58,45 52,42', '75,40 80,36 90,30 97,28 100,22 107,22', '86,49 95,44 106,42 118,47 127,50', '54,37 61,36 66,38 74,37', '61,36 61,29 63,25', '44,40 46,33 50,30', '97,28 94,22', '100,22 102,18 106,15', '24,58 28,52 24,48 22,42', '30,52 38,50', '14,54 18,48 26,45'].forEach(p => s += b(p));
      if (kind < 3) s += add(W.sweden, '#2765d8', '#2765d8', o); else s += add(W.denmark, BLUE, BLUE, o) + add(W.sweden, F, S, o) + add(W.pakistan, '#9dbff0', '#8fb2e6', o);
    }
    s = `<clipPath id="c${id}"><rect x="${x + 1}" y="788" width="252" height="180"/></clipPath><g clip-path="url(#c${id})">${s}</g>`;
    s += `<linearGradient id="gr${id}"><stop stop-color="#cfe0f7"/><stop offset="1" stop-color="${BLUE}"/></linearGradient>`;
    s += text(x + 4, 976.7, lo, 7.4, '#333') + rect(x + 12, 973, bw, 8, `url(#gr${id})`) + text(x + 15.5 + bw, 976.7, hi, 7.4, '#333');
    $(id).innerHTML = s;
  };
  light('map1', 1921, 1, '7,239', 1, 56); light('map2', 2182, 0, 36, 2, 65); light('map3', 2443, 0, 1, 3, 69);
})();

/* ---- search console charts ---- */
(() => {
  const G = '#ccc', K = '#333';
  let s = '';
  for (let i = 0; i <= 6; i++) s += line(2060.6, 177.3 + i * 13, 2684.5, 177.3 + i * 13, G);
  for (let i = 0; i < 16; i++) { const x = 2060.6 + i * 41.6; s += line(x, 177.3, x, 255.3, G) + text(x, 263.3, i < 15 ? `${1 + 2 * i} Aug` : '31 A...', 8.2, K, 'middle'); }
  [500, 400, 300, 200].forEach((t, i) => s += text(2056, 177.300 + i * 26, t, 8.2, K, 'end') + text(2688, 177.3 + i * 26, 6 - 2 * i, 8.2, K));
  s += line(2060.6, 177, 2060.6, 256, '#000') + line(2060.6, 255.5, 2684.5, 255.5, '#000', 1.2);
  s += poly(pts([326, 295, 306, 297, 257, 275, 342, 410, 379, 373, 373, 324, 401, 391, 429, 406, 418, 381, 316, 270, 326, 334].map(n => n - 200), 2143.8, 20.8, 255.3, .26), BLUE, 1.3);
  s += poly(pts([3, 1, 4, 1, 0, 2, 0, 4, 3, 1, 0, 1, 2, 6, 0, 1, 3, 0, 1, 1, 4, 0], 2143.8, 20.8, 255.3, 13), TEAL, 1.3);
  s += line(2060.6, 165.7, 2078, 165.7, BLUE, 1.3) + text(2081, 166, 'Impressions', 8.7, K) + line(2142.700, 165.7, 2160, 165.7, TEAL, 1.3) + text(2163, 166, 'Url Clicks', 8.7, K);
  $('sc-line').innerHTML = s;

  s = rect(2070.7, 323, 18, 9, BLUE) + text(2091.5, 327.3, 'Impressions', 8.7, K) + rect(2153, 323, 18, 9, TEAL) + text(2173.7, 327.3, 'Url Clicks', 8.700, K);
  [341.5, 351.3, 355.5, 359.7, 369.3, 377.3, 382.3, 387.3].forEach(y => s += line(2070.7, y, 2665, y, G));
  [['1.5K', 342], ['1K', 360], ['500', 378], ['0', 396]].forEach(([t, y]) => s += text(2062.7, y, t, 8.2, K, 'end'));
  [['10', 342], ['5', 369], ['0', 396]].forEach(([t, y]) => s += text(2672, y, t, 8.2, K));
  const b = [1086, 1074, 1026, 1071, 1071, 1074, 1092], t = [1107, 1026, 1074, 1107, 1059, 1173, 1155];
  ['Sunday', 'Monday', 'Tuesday', 'Wednesday', 'Thursday', 'Friday', 'Saturday'].forEach((d, i) => {
    const x = 2079.8 + i * 84.55;
    s += rect(x, b[i] / 3, 34, 395.5 - b[i] / 3, BLUE) + rect(x + 33.7, t[i] / 3, 34.3, 395.5 - t[i] / 3, TEAL) + text(x + 34, 405.5, d, 8.1, K, 'middle');
  });
  s += line(2070.7, 395.7, 2665, 395.7, '#000', 1.2);
  $('sc-bars').innerHTML = s;

  const donut = (id, cx, parts, labels) => {
    let a = 0, s = '';
    parts.forEach(([v, c]) => { s += slice(cx, 1130.5, 87.5, 52.5, a, a + v, c); a += v; });
    labels.forEach(([x, y, t]) => s += text(x, y, t, 6.9, '#dfe9fb', 'middle'));
    s += `<svg x="${cx - 17}" y="1096" width="33" height="30.500"><use href="#devices"/></svg>`;
    [[-66.7, PINK, 'TABLET'], [-17.8, TEAL, 'MOBILE'], [30.700, BLUE, 'DESKTOP']].forEach(([o, c, t]) => s += `<circle cx="${cx + o}" cy="1227.300" r="3.800" fill="${c}"/>` + text(cx + o + 6.3, 1227.5, t, 7.2, K));
    $(id).innerHTML = s;
  };
  donut('donut1', 2047.3, [[.27, TEAL], [.7265, BLUE], [.0035, PINK]], [[2102, 1082.5, '27%'], [1994, 1176.5, '72.9%']]);
  donut('donut2', 2308.3, [[.526, TEAL], [.474, BLUE]], [[2378, 1136.500, '52.6%'], [2238, 1124.500, '47.4%']]);
  s = '';
  for (let i = 1; i <= 10; i++) s += line(2477, 1187.3 - i * 13.5, 2680, 1187.3 - i * 13.5, G);
  ['0%', '0.2%', '0.4%', '0.6%', '0.8%', '1%'].forEach((t, i) => s += text(2469.5, 1187.5 - i * 27, t, 7.8, K, 'end'));
  s += rect(2551, 1056, 55, 131, BLUE) + rect(2618.7, 1143, 54.5, 44, BLUE) + text(2578.5, 1061.5, '0.98%', 7, '#dfe9fb', 'middle') + text(2645.8, 1148.7, '0.32%', 7, '#dfe9fb', 'middle') + text(2511.5, 1175.7, '0%', 7, '#5a8fee', 'middle') + line(2512, 1179, 2512, 1187, '#999', .7);
  s += line(2477, 1187.4, 2680, 1187.4, '#000', 1.2);
  [[2511.5, 'TABLET'], [2578.5, 'MOBILE'], [2646, 'DESKTOP']].forEach(([x, t]) => s += text(x, 1196.5, t, 7.6, K, 'middle'));
  s += rect(2478, 1215, 15, 7.7, BLUE) + text(2495, 1218.7, 'URL CTR', 7.6, K);
  $('ctr').innerHTML = s;
})();

/* ---- tables ---- */
const mostViewed = [['/offert/', [52, 21], 7, '0.13'], ['/batterilagring-solna/', [12, 5], 1, '0.08'], ['/', [170, 67], 0, 0], ['/?gtm_latency=1', [11, 5], 0, 0]];
const one4 = ['1', '1', '1', '1'];
const q = (n, name, imp, ic, clk, cc, ctr, tc, pos, pc) => [n + '.', name, { t: imp, bg: ic }, '-', { t: clk, bg: cc }, '-', { t: ctr, bg: tc }, '-', { t: pos, bg: pc }, '-'];
const rq = (n, name, imp, ic, pos, pc) => [n + '.', '26 Aug 2025', name, { t: imp, bg: ic }, '-', { t: 0, bg: '#f5fdfb' }, '-', { t: '0%', bg: '#fdf3fa' }, '-', { t: pos, bg: pc }, '-'];
const T = {
  viewed: { h: 'lllr', b: 'lbrr', head: ['Page path + query string', 'Views', 'Form Submit ...', 'Conversion Ratio▾'], rows: mostViewed },
  landing: { h: 'lllr', b: 'lbrr', head: ['Landing page', 'Sessions', 'Form Submit S...▾', 'LP Conversion Rate'], rows: [['/', [136, 73], 5, '0.04'], ['/integritetspolicy', [13, 8], 4, '0.31'], ['/installation-belysning-solna', [1, 1], 0, 0], ['/offert', [3, 3], 0, 0]] },
  traffic: { h: 'lllr', b: 'lbrr', head: ['Page path + query string', 'Views', 'Form Submit ...', 'Conversion Ratio▾'], rows: [...mostViewed, ['/eljour-solna/', [10, 4], 0, 0]] },
  events: { h: 'llr', b: 'lbr', head: ['Event name', 'Event count▾', 'Total users'], rows: [['scroll_depth', [938, 121], 57], ['page_view', [385, 50], 95], ['service_interest', [362, 47], 86], ['user_engagement', [314, 41], 82], ['session_start', [196, 26], 97], ['form_start', [143, 19], 8], ['scroll', [120, 16], 66], ['first_visit', [100, 14], 97], ['cta_click', [92, 13], 22], ['click_outbound', [59, 8], 15]] },
  sources: { h: 'll', b: 'lb', head: ['Session default chan...', 'Form Submit Success▾'], rows: [['Organic Search', [4, 92]], ['Direct', [3, 69]]] },
  first: { h: 'll', b: 'lb', head: ['First user s...', 'Form Submit Success▾'], rows: [['(direct) / (none)', [3, 225]], ['google / organ...', [3, 225]], ['tagassistant.g...', [3, 225]], ['(not set)', [0, 1]], ['eniro.lightning...', [0, 1]]] },
  last: { h: 'll', b: 'lb', head: ['Session sour...', 'Form Submit Success▾'], rows: [['(direct) / (none)', [3, 207]], ['google / organic', [3, 207]], ['tagassistant.goo...', [2, 138]], ['eniro.se / referr...', [1, 70]], ['(not set)', [0, 1]]] },
  paths: { h: 'll', b: 'lb', head: ['Page referrer', 'Form Submit Success▾'], rows: [['https://www.elektriker-solna.com/', [3, 94]], ['https://www.elektriker-solna.com/integritetspolicy/', [3, 94]], ['https://www.elektriker-solna.com/?gtm_debug=1754665255017', [1, 32]], ['https://www.elektriker-solna.com/foretag-brf-solna/', [1, 32]], ['https://www.elektriker-solna.com/installation-jordfelsbrytare...', [1, 32]], ['https://elektriker-taby.se/?ved=2ahUKEwir78mZ5KyPAxU6C...', [0, 1]], ['https://www.google.com/', [0, 1]], ['http://test.local/elektriker-arenastaden/', [0, 1]], ['http://test.local/elektriker-solna/', [0, 1]]] },
  key: { h: 'llrr', b: 'lbrr', head: ['Page path + query string', 'Views▾', 'Avg. engagem...', 'Percent Scr...'], rows: [['/', [174, 45], '00:46:42', 90], ['/offert/', [53, 14], '00:34:00', 90], ['/thank-you/', [18, 5], '00:02:44', 90], ['/integritetspolicy/', [16, 5], '00:00:59', 90], ['/om-oss/', [16, 5], '00:05:10', 90], ['/batterilagring-solna/', [12, 4], '00:01:38', 90], ['/?gtm_latency=1', [11, 4], '00:00:00', ''], ['/eljour-solna/', [10, 4], '00:01:52', 90], ['/foretag-brf-solna/', [9, 3], '00:01:32', 90], ['/installation-belysning-solna/', [8, 3], '00:02:11', 90]] },
  source: { h: 'llcc', b: 'llcc', head: ['', 'Session source/medium', 'Sessions▾', '% Δ'], rows: [['1.', '(direct) / (none)', 72, '-'], ['2.', 'google / organic', 61, '-'], ['3.', '(not set)', 58, '-'], ['4.', 'google / cpc', 22, '-'], ['5.', 'tagassistant.google.com / referral', 22, '-'], ['6.', 'eniro.se / referral', 18, '-'], ['7.', '(data not available)', 1, '-']], total: ['', 'Grand total', 247, '-'], foot: '1 - 8 / 8' },
  channel: { h: 'llcc', b: 'llcc', head: ['', 'Session default channel g...', 'Sessions▾', '% Δ'], rows: [['1.', 'Organic Search', 79, '-'], ['2.', 'Direct', 72, '-'], ['3.', 'Unassigned', 58, '-'], ['4.', 'Referral', 23, '-'], ['5.', 'Paid Search', 22, '-'], ['6.', 'Cross-network', 1, '-']], total: ['', 'Grand total', 247, '-'], foot: '1 - 6 / 6' },
  pages: { h: 'llcccc', b: 'llcccc', head: ['', 'Landing page + query string', 'Sessions', 'New users▾', 'Total users', 'Engaged sessions'], rows: [['1.', '/', 113, 72, 73, 67], ['2.', '/?gtm_latency=1', 11, 11, 11, 0], ['3.', '(not set)', 75, 4, 59, 8], ['4.', '', 16, 3, 11, 2], ['5.', '/offert/', 3, 2, 3, 3], ['6.', '/integritetspolicy/', 13, 1, 2, 13], ['7.', '/?gtm_debug=1754507948931', ...one4], ['8.', '/?ved=2ahUKEwiAm-icvaWPAxX4ERAIHRCFHFsQgU96BAgQEA8', ...one4], ['9.', '/?ved=2ahUKEwiSk5-Nxa2PAxUnU1UIHS4FHXAQgU96BAgNEA8', ...one4], ['10.', '/?ved=2ahUKEwigksKa_JyPAxU_CRAIHYevPdwQgU96BQiDARAP', ...one4]], total: ['', 'Grand total', 247, 102, 148, 113], foot: '1 - 32 / 32' },
  ev: { h: 'llcc', b: 'llcc', head: ['', 'Event name', 'Event count▾', 'Total users'], rows: [['1.', 'scroll_depth', 941, 59], ['2.', 'page_view', 388, 98], ['3.', 'service_interest', 365, 88], ['4.', 'user_engagement', 317, 84]] },
  query: { h: 'llrrlrrrrr', b: 'llrrrrrrrr', head: ['', 'Query', 'Impressions', '% Δ', '>Url Cli...▾', '% Δ', 'URL CTR', '% Δ', 'Average Position', '% Δ'],
    rows: [q(1, 'elektriker solna', 892, '#3072e8', 13, '#50b3c8', '1.46%', '#fcf1f9', 1.61, '#fcf7f2'), q(2, 'elektriker', 698, '#4f8ced', 2, '#d7f0f3', '0.29%', '#fdf4fa', 2.28, '#fcf6f1'), q(3, 'företag i solna', 48, '#eaf2fc', 2, '#d7f0f3', '4.17%', '#fbecf7', 4.83, '#fcf4ed'), q(4, 'el företag', 8, '#f3f8fd', 1, '#e6f5f8', '12.5%', '#f6d6ed', 3.75, '#fcf5ef'), q(5, 'elektriker gärdet', 2, '#f5f9fe', 1, '#e6f5f8', '50%', '#e680c3', 1, '#fcf7f2'), q(6, 'elfirmor i stockholm', 1, '#f6fafe', 1, '#e6f5f8', '100%', '#dd3093', 21, '#f7dcc5'), q(7, 'elföretag', 46, '#eaf2fc', 1, '#e6f5f8', '2.17%', '#fcf0f8', 9.57, '#fbeee1'), q(8, 'eljour solna', 183, '#c8dcf7', 1, '#e0f3f6', '0.55%', '#fcf3fa', 38.23, '#f3c7a2'), q(9, 'service elektriker', 34, '#edf4fc', 1, '#e6f5f8', '2.94%', '#fbeef7', 7.03, '#fcf0e6')],
    total: ['', 'Grand total', '7,603', '-', 38, '-', '0.5%', '-', 30.1, '-'], foot: '1 - 100 / 290' },
  recent: { h: 'lllrrlrrrrr', b: 'lllrrrrrrrr', head: ['', 'Date①▾', 'Query', 'Impressions', '% Δ', '>U...②▾', '% Δ', 'URL CTR', '% Δ', 'Average Position', '% Δ'],
    rows: [rq(1, 'amina s zigbee', 1, '#f4f8fe', 60, '#ebab75'), rq(2, 'byte av elcentra solna', 1, '#f4f8fe', 85, '#e68d42'), rq(3, 'certifierad vitvaruinstallation', 2, '#eaf3fb', 24, '#f6dac2'), rq(4, 'datanät solna', 1, '#f4f8fe', 92, '#e58434')] },
};
const head = t => { const ind = t.startsWith('>'); return (ind ? '<i class="indent"></i>' : '') + t.replace('>', '').replace('①', '<i class="num">1</i>').replace('②', '<i class="num">2</i>').replace('▾', '<i class="tri"></i>'); };
const cell = (v, a) => a == 'b' ? `<div class="l"><span class="n">${v[0]}</span><i class="bar" style="width:${v[1]}px"></i></div>`
  : v && v.bg ? `<div class="${a}" style="background:${v.bg}">${v.t}</div>` : `<div class="${a}">${v}</div>`;
document.querySelectorAll('[data-table]').forEach(el => {
  const t = T[el.dataset.table];
  let s = `<div class="row head">${t.head.map((x, i) => `<div class="${t.h[i]}">${head(x)}</div>`).join('')}</div><div class="body">`;
  s += t.rows.map(r => `<div class="row tr">${r.map((x, i) => cell(x, t.b[i])).join('')}</div>`).join('') + '</div>';
  if (t.total) s += `<div class="row total">${t.total.map((x, i) => cell(x, t.b[i])).join('')}</div>`;
  if (t.foot) s += `<div class="foot">${t.foot}<svg><use href="#prev"/></svg><svg><use href="#next"/></svg></div>`;
  el.innerHTML = s;
});
document.querySelectorAll('[data-pager]').forEach(el => el.innerHTML = `<span>${el.dataset.pager}</span><svg><use href="#prev"/></svg><svg><use href="#next"/></svg>`);
```
